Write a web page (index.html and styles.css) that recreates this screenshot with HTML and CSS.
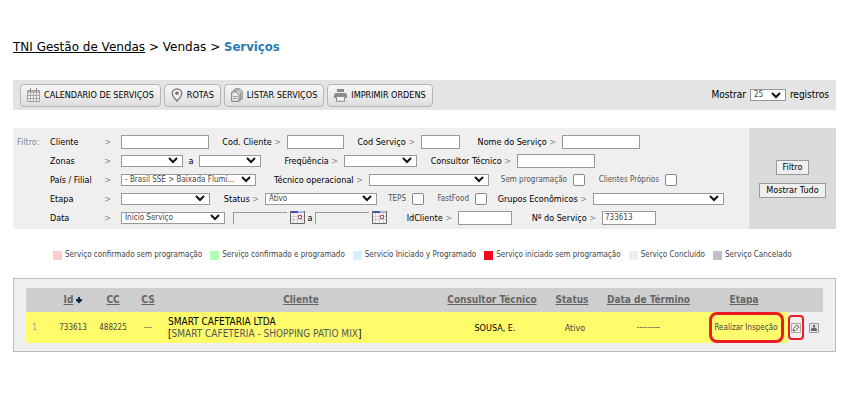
FILE: index.html
```html
<!DOCTYPE html>
<html lang="pt-BR">
<head>
<meta charset="utf-8">
<title>TNI Gestão de Vendas - Serviços</title>
<link rel="stylesheet" href="styles.css">
</head>
<body>
<nav class="breadcrumb"><a href="#">TNI Gestão de Vendas</a> &gt; <span>Vendas</span> &gt; <strong>Serviços</strong></nav>

<div class="toolbar">
  <button class="tool" type="button">
    <svg width="13" height="14" viewBox="0 0 13 14"><path d="M.5 2.5h12v11H.5z" fill="#f4f4f4" stroke="#a39b97"/><path d="M1 3h11v2H1z" fill="#b5aeab"/><path d="M3.500 5v8M6.500 5v8M9.500 5v8M1 7.500h11M1 10.500h11" stroke="#aaa3a0"/><path d="M3.500 0v3M9.500 0v3" stroke="#8d8682"/></svg>
    CALENDARIO DE SERVIÇOS</button>
  <button class="tool" type="button">
    <svg width="12" height="14" viewBox="0 0 12 14"><path d="M6 .8C3.200.8 1.200 2.800 1.200 5.400c0 3 2.800 5 4.800 7.800 2-2.800 4.800-4.800 4.800-7.800C10.800 2.800 8.800.8 6 .8z" fill="#eee" stroke="#777" stroke-width="1.300"/><circle cx="6" cy="5.300" r="1.800" fill="#777"/></svg>
    ROTAS</button>
  <button class="tool" type="button">
    <svg width="12" height="14" viewBox="0 0 12 14"><path d="M4 2V.8h5l2.200 2.200v8H9" fill="#ddd" stroke="#888"/><path d="M2.500 3.500V2.200h5l2.200 2.200v7.600H8" fill="#ddd" stroke="#888"/><path d="M.7 4h4.600L8 6.500v6.800H.7z" fill="#eee" stroke="#777"/><path d="M2 8.500h4.500M2 10.500h4.500" stroke="#999"/></svg>
    LISTAR SERVIÇOS</button>
  <button class="tool" type="button">
    <svg width="13" height="13" viewBox="0 0 13 13"><path d="M3 0h7v3H3zM1.500 4h10L13 5.500V9h-2V7H2v2H0V5.500z" fill="#8b8b8b"/><path d="M2.500 7.500h8v4.800h-8z" fill="#eee" stroke="#8b8b8b"/></svg>
    IMPRIMIR ORDENS</button>
  <div class="page-size">
    <label for="size">Mostrar</label>
    <select id="size"><option>25</option></select>
    <span>registros</span>
  </div>
</div>

<form class="filter">
  <div class="filter-title">Filtro:</div>
  <div class="fields">
    <div class="row row-1">
      <label class="first" for="cliente">Cliente <i>&gt;</i></label><input id="cliente" type="text">
      <label for="codc">Cod. Cliente <i>&gt;</i></label><input id="codc" type="text">
      <label for="cods">Cod Serviço <i>&gt;</i></label><input id="cods" type="text">
      <label for="nome">Nome do Serviço <i>&gt;</i></label><input id="nome" type="text">
    </div>
    <div class="row row-2">
      <label class="first" for="z1">Zonas <i>&gt;</i></label><select id="z1"><option></option></select>
      <label class="mid" for="z2">a</label><select id="z2"><option></option></select>
      <label for="freq">Freqüência <i>&gt;</i></label><select id="freq"><option></option></select>
      <label for="cons">Consultor Técnico <i>&gt;</i></label><input id="cons" type="text">
    </div>
    <div class="row row-3">
      <label class="first" for="pais">País / Filial <i>&gt;</i></label><select id="pais"><option>- Brasil SSE &gt; Baixada Flumi...</option></select>
      <label for="tec">Técnico operacional <i>&gt;</i></label><select id="tec"><option></option></select>
      <label class="small" for="semp">Sem programação</label><input id="semp" type="checkbox">
      <label class="small" for="prop">Clientes Próprios</label><input id="prop" type="checkbox">
    </div>
    <div class="row row-4">
      <label class="first" for="etapa">Etapa <i>&gt;</i></label><select id="etapa"><option></option></select>
      <label for="status">Status <i>&gt;</i></label><select id="status"><option>Ativo</option></select>
      <label class="small" for="teps">TEPS</label><input id="teps" type="checkbox">
      <label class="small" for="fast">FastFood</label><input id="fast" type="checkbox">
      <label for="grp">Grupos Econômicos <i>&gt;</i></label><select id="grp"><option></option></select>
    </div>
    <div class="row row-5">
      <label class="first" for="data">Data <i>&gt;</i></label><select id="data"><option>Inicio Serviço</option></select>
      <input class="date" type="text" aria-label="Data inicial">
      <button class="cal" type="button" aria-label="Abrir calendário inicial"><svg width="15" height="13" viewBox="0 0 15 13"><path d="M0 0h14v12H0z" fill="#f5f3f3"/><path d="M3.500 2v10M7.500 2v10M11.500 2v10M0 5.500h14M0 8.500h14" stroke="#d2cdd0"/><path d="M0 0h8v2H0z" fill="#4654b4"/><path d="M8 0h6v2H8z" fill="#a9b2e0"/><path d="M8.500 4.500h3v3h-3z" fill="#fff" stroke="#b65050"/><path d="M.5 0v12.500h14V0" fill="none" stroke="#666"/></svg></button>
      <label class="mid" for="d2">a</label>
      <input class="date" id="d2" type="text">
      <button class="cal" type="button" aria-label="Abrir calendário final"><svg width="15" height="13" viewBox="0 0 15 13"><path d="M0 0h14v12H0z" fill="#f5f3f3"/><path d="M3.500 2v10M7.500 2v10M11.500 2v10M0 5.500h14M0 8.500h14" stroke="#d2cdd0"/><path d="M0 0h8v2H0z" fill="#4654b4"/><path d="M8 0h6v2H8z" fill="#a9b2e0"/><path d="M8.500 4.500h3v3h-3z" fill="#fff" stroke="#b65050"/><path d="M.5 0v12.500h14V0" fill="none" stroke="#666"/></svg></button>
      <label for="idc">IdCliente <i>&gt;</i></label><input id="idc" type="text">
      <label for="num">Nº do Serviço <i>&gt;</i></label><input id="num" type="text" value="733613">
    </div>
  </div>
  <div class="actions">
    <button type="submit">Filtro</button>
    <button type="button">Mostrar Tudo</button>
  </div>
</form>

<ul class="legend">
  <li class="pink">Serviço confirmado sem programação</li>
  <li class="green">Serviço confirmado e programado</li>
  <li class="blue">Servicio Iniciado y Programado</li>
  <li class="red">Serviço iniciado sem programação</li>
  <li class="pale">Serviço Concluído</li>
  <li class="gray">Serviço Cancelado</li>
</ul>

<section class="results">
  <table>
    <colgroup><col class="c-n"><col class="c-id"><col class="c-cc"><col class="c-cs"><col><col class="c-cons"><col class="c-st"><col class="c-dt"><col class="c-et"><col class="c-ic"><col class="c-ic"></colgroup>
    <thead>
      <tr>
        <th></th>
        <th><a href="#">Id</a> <svg class="sort" width="6" height="7" viewBox="0 0 6 7"><path d="M2 0h2v2h2v1.500L3 6.500 0 3.500V2h2z" fill="#10283c"/></svg></th>
        <th><a href="#">CC</a></th><th><a href="#">CS</a></th><th><a href="#">Cliente</a></th><th><a href="#">Consultor Técnico</a></th><th><a href="#">Status</a></th><th><a href="#">Data de Término</a></th><th><a href="#">Etapa</a></th><th></th><th></th>
      </tr>
    </thead>
    <tbody>
      <tr>
        <td class="num">1</td><td>733613</td><td>488225</td><td>---</td>
        <td class="client">SMART CAFETARIA LTDA<br>[<small>SMART CAFETERIA - SHOPPING PATIO MIX</small>]</td>
        <td class="person">SOUSA, E.</td><td class="status">Ativo</td><td>---------</td>
        <td class="marked stage">Realizar Inspeção</td>
        <td class="icon marked"><button type="button" aria-label="Editar"><svg width="10" height="10" viewBox="0 0 10 10"><path d="M.5.5h9v9h-9z" fill="#e8e8e8" stroke="#aaa"/><path d="M2 8l.6-2.500L6 2l2 2-3.500 3.400z" fill="#fff" stroke="#666"/></svg></button></td>
        <td class="icon"><button type="button" aria-label="Detalhes"><svg width="10" height="10" viewBox="0 0 10 10"><path d="M.5.5h9v9h-9z" fill="#e4e4e4" stroke="#999"/><circle cx="5" cy="3" r="1.200" fill="#666"/><path d="M2 8V6l2-1.500h2L8 6v2z" fill="#666"/></svg></button></td>
      </tr>
    </tbody>
  </table>
</section>
</body>
</html>
```
FILE: styles.css
```css
* { box-sizing: border-box; }
body {
  margin: 0;
  padding: 37px 9px 0 13px;
  background: #fff;
  color: #000;
  font: 9px/12px "DejaVu Sans Condensed", "DejaVu Sans", sans-serif;
}
button, input, select { font: inherit; margin: 0; }
a { color: inherit; }

.breadcrumb { margin-bottom: 23px; font-family: "DejaVu Sans", sans-serif; font-size: 12px; line-height: 20px; }
.breadcrumb strong { color: #2a7ab5; font-family: "DejaVu Sans Condensed", "DejaVu Sans", sans-serif; font-size: 13px; }

.toolbar {
  display: flex;
  align-items: center;
  gap: 3px;
  height: 30px;
  padding: 0 7px;
  background: #e4e4e4;
}
.tool {
  display: flex;
  align-items: center;
  gap: 4px;
  height: 23px;
  padding: 0 6px;
  border: 1px solid #b5b5b5;
  border-radius: 4px;
  background: linear-gradient(#f8f8f8, #dedede);
  color: #000;
  white-space: nowrap;
}
.page-size { display: flex; align-items: center; gap: 4px; margin-left: auto; font-size: 10px; }
.page-size select { width: 36px; }

input[type="text"] {
  width: 100%;
  height: 14px;
  padding: 0 2px;
  border: 1px solid #999;
  border-radius: 0;
  background: #fff;
  color: #444;
  font-size: 8px;
}
select {
  width: 100%;
  height: 12px;
  padding: 0 14px 0 3px;
  border: 1px solid #999;
  border-radius: 0;
  appearance: none;
  background: #fff url("data:image/svg+xml,%3Csvg xmlns='http://www.w3.org/2000/svg' width='10' height='7'%3E%3Cpath d='M1 1l4 4 4-4' fill='none' stroke='%23111' stroke-width='2'/%3E%3C/svg%3E") no-repeat right 4px center;
  color: #444;
  font-size: 8px;
  line-height: 10px;
}
input[type="checkbox"] {
  width: 12px;
  height: 12px;
  border: 1px solid #888;
  border-radius: 2px;
  appearance: none;
  background: #fff;
}

.filter { display: flex; margin-top: 18px; background: #efefef; }
.filter-title { width: 37px; padding: 8px 0 0 4px; color: #888; }
.fields { flex: 1; padding: 4px 0 2px; }
.row { display: grid; align-items: center; height: 19px; }
.row label { padding-right: 6px; text-align: right; white-space: nowrap; }
.row label i { color: #888; font-style: normal; }
.row .first { display: flex; justify-content: space-between; padding-right: 10px; }
.row .small { color: #555; font-size: 8px; }
.row .mid { padding: 0; text-align: center; }
.row-1 { grid-template-columns: 71px 88px 78px 57px 77px 39px 102px 78px; }
.row-2 { grid-template-columns: 71px 62px 16px 62px 83px 73px 100px 78px; }
.row-3 { grid-template-columns: 71px 135px 113px 120px 84px 12px 80px 12px; }
.row-4 { grid-template-columns: 71px 89px 55px 112px 35px 12px 51px 12px 106px 131px; }
.row-5 { grid-template-columns: 71px 104px 62px 18px 10px 54px 18px 71px 54px 90px 54px; }
.row input.date { justify-self: end; width: 54px; height: 12px; border-width: 1px 0 0 1px; background: transparent; }
.cal { justify-self: end; width: 15px; height: 13px; padding: 0; border: 0; background: none; }
.cal svg { display: block; }

.actions {
  display: flex;
  flex-direction: column;
  align-items: center;
  justify-content: center;
  gap: 8px;
  width: 87px;
  background: #dadada;
}
.actions button {
  height: 15px;
  padding: 0 6px;
  border: 1px solid #999;
  background: #efefef;
  color: #000;
  line-height: 12px;
  white-space: nowrap;
}

.legend {
  display: flex;
  gap: 8px;
  margin: 20px 0 17px;
  padding: 0 0 0 40px;
  list-style: none;
  color: #444;
  font-size: 8px;
  white-space: nowrap;
}
.legend li { display: flex; align-items: center; gap: 3px; }
.legend li::before { content: ""; width: 9px; height: 9px; background: currentColor; }
.legend .pink::before { background: #fcc; }
.legend .green::before { background: #b3ffb3; }
.legend .blue::before { background: #d6f0ff; }
.legend .red::before { background: #ff0020; }
.legend .pale::before { background: #eee; }
.legend .gray::before { background: #c0c0c0; }

.results { padding: 9px 12px 8px; border: 1px solid #bbb; background: #efefef; }
table { width: 100%; border-collapse: collapse; table-layout: fixed; }
th, td { padding: 0; text-align: center; white-space: nowrap; }
th { height: 24px; background: #cecece; color: #666; font-size: 10px; }
td { height: 31px; background: #fffc6b; color: #444; font-size: 8px; }
.c-n { width: 24px; }
.c-id { width: 46px; }
.c-cc { width: 34px; }
.c-cs { width: 36px; }
.c-cons { width: 112px; }
.c-st { width: 48px; }
.c-dt { width: 105px; }
.c-et { width: 86px; }
.c-ic { width: 18px; }
.sort { vertical-align: -1px; }
td.num { padding-right: 7px; color: #999; }
td.client { padding-left: 2px; color: #000; font-size: 10px; text-align: left; }
.client small { color: #555; font-size: 10px; }
td.person { padding-left: 6px; color: #000; font-size: 9px; }
td.status { padding-left: 6px; font-size: 9px; }
td.stage { padding-left: 4px; }
td.icon { background: #efefef; }
.icon button { display: block; width: 10px; height: 10px; margin: 0 auto; padding: 0; border: 0; background: none; }
.icon svg { display: block; }
.marked { position: relative; }
.marked::after {
  content: "";
  position: absolute;
  inset: 3px 1px;
  border: 2px solid #ed1c24;
  border-radius: 4px;
}
.stage::after { inset: 0 3px 0 8px; border-width: 3px; border-radius: 8px; }
```
